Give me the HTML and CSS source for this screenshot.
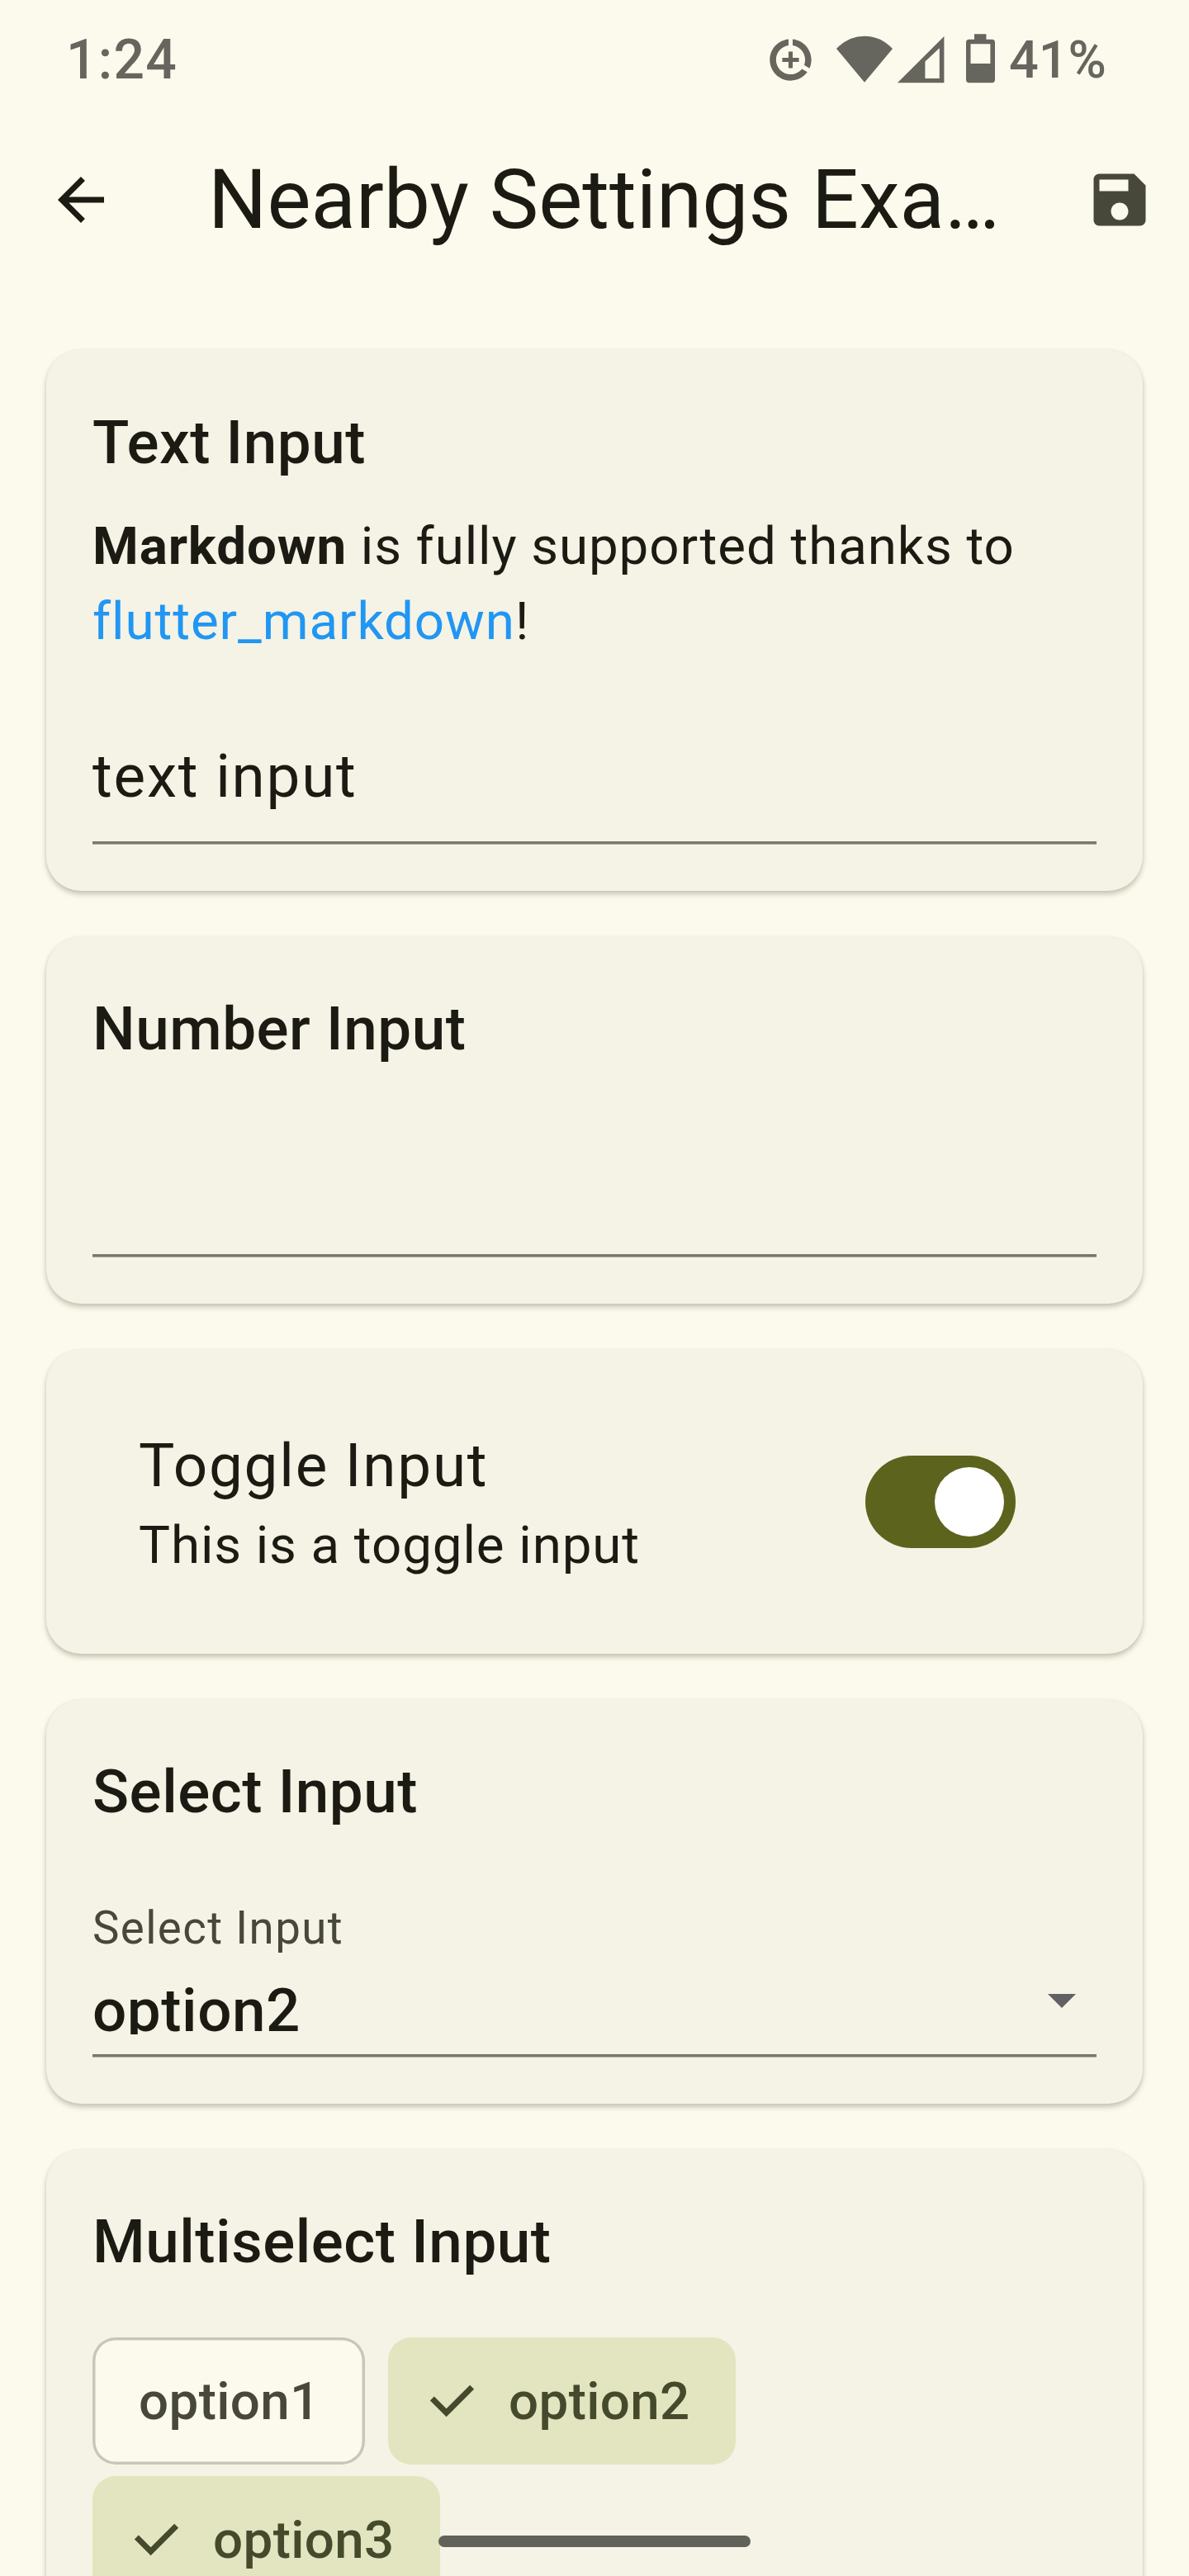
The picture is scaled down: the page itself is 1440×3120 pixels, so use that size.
FILE: index.html
```html
<!DOCTYPE html>
<html lang="en">
<head>
<meta charset="utf-8">
<title>Nearby Settings Example</title>
<link rel="stylesheet" href="styles.css">
</head>
<body>
<div class="screen">
  <header class="status">
    <span class="clock">1:24</span>
    <svg class="status-icons" width="282" height="70" viewBox="927 38 282 70">
      <path transform="translate(927.3 42.3) scale(2.515)" d="M11 8v3H8v2h3v3h2v-3h3v-2h-3V8h-2zm2-5.950v3.030c3.390.490 6 3.390 6 6.920 0 .900-.180 1.750-.480 2.540l2.600 1.530c.560-1.240.880-2.620.880-4.070 0-5.180-3.950-9.450-9-9.950zM12 19c-3.870 0-7-3.130-7-7 0-3.530 2.610-6.430 6-6.920V2.050c-5.060.500-9 4.760-9 9.950 0 5.520 4.470 10 9.990 10 3.310 0 6.240-1.610 8.060-4.090l-2.600-1.530C16.170 17.980 14.210 19 12 19z"/>
      <path d="M1047 99.700L1013 59Q1027.500 43.700 1047 43.700T1081 59Z"/>
      <path fill-rule="evenodd" d="M1087 100.200L1143.400 44V100.200ZM1120.400 95H1137.800V58.300L1120.400 74.500Z"/>
      <path fill-rule="evenodd" d="M1180 41.300H1194.400V47.700H1201.400Q1205 47.700 1205 51.300V96.500Q1205 100.200 1201.400 100.200H1173.600Q1170 100.200 1170 96.500V51.300Q1170 47.700 1173.600 47.700H1180ZM1175.500 53.300V77H1199.400V53.300Z"/>
    </svg>
    <span class="battery">41%</span>
  </header>

  <nav class="appbar">
    <svg class="icon back" viewBox="0 0 24 24"><path d="M20 11H7.830l5.590-5.590L12 4l-8 8 8 8 1.410-1.410L7.830 13H20v-2z"/></svg>
    <h1 class="title">Nearby Settings Exa…</h1>
    <svg class="icon save" viewBox="0 0 24 24"><path d="M17 3H5c-1.110 0-2 .9-2 2v14c0 1.100.890 2 2 2h14c1.100 0 2-.9 2-2V7l-4-4zm-5 16c-1.660 0-3-1.340-3-3s1.340-3 3-3 3 1.340 3 3-1.340 3-3 3zm3-10H5V5h10v4z"/></svg>
  </nav>

  <main class="cards">
    <section class="card card-text">
      <h2 class="heading">Text Input</h2>
      <p class="desc"><b>Markdown</b> is fully supported thanks to <a class="link">flutter_markdown</a>!</p>
      <div class="field"><span class="value">text input</span></div>
      <div class="rule"></div>
    </section>

    <section class="card">
      <h2 class="heading">Number Input</h2>
      <div class="field field-empty"></div>
      <div class="rule"></div>
    </section>

    <section class="card card-toggle">
      <div class="toggle-text">
        <div class="toggle-title">Toggle Input</div>
        <div class="toggle-sub">This is a toggle input</div>
      </div>
      <div class="switch"><div class="thumb"></div></div>
    </section>

    <section class="card">
      <h2 class="heading">Select Input</h2>
      <div class="label">Select Input</div>
      <div class="select">
        <span class="selected">option2</span>
        <svg class="caret" width="34" height="17" viewBox="0 0 34 17"><path d="M0 0H34L17 17Z"/></svg>
      </div>
      <div class="rule"></div>
    </section>

    <section class="card card-multi">
      <h2 class="heading">Multiselect Input</h2>
      <div class="chips">
        <div class="chip outline"><span>option1</span></div>
        <div class="chip filled">
          <svg class="check" viewBox="0 0 69 69"><path d="M10.350 31.050L27.600 48.300L58.650 17.250"/></svg>
          <span>option2</span>
        </div>
        <div class="chip filled">
          <svg class="check" viewBox="0 0 69 69"><path d="M10.350 31.050L27.600 48.300L58.650 17.250"/></svg>
          <span>option3</span>
        </div>
      </div>
    </section>
  </main>
  <div class="home-bar"></div>
</div>
</body>
</html>
```
FILE: styles.css
```css
* { box-sizing: border-box; }
body {
  margin: 0;
  background: #fcfaec;
  color: #1c1b13;
  font-family: Roboto, sans-serif;
}
.screen {
  position: relative;
  width: 1440px;
  height: 3120px;
  overflow: hidden;
  display: flex;
  flex-direction: column;
}
h1, h2, p { margin: 0; }

.status {
  height: 144px;
  flex: none;
  display: flex;
  align-items: center;
  padding: 1px 100px 0 80px;
  color: #66655e;
  font-weight: 500;
}
.clock { font-size: 66px; letter-spacing: 1.3px; }
.status-icons { margin-left: auto; fill: #66655e; }
.battery { font-size: 63px; margin-left: 13px; }

.appbar {
  height: 196px;
  flex: none;
  display: flex;
  align-items: center;
  padding: 0 42px 0 56px;
}
.icon { width: 84px; height: 84px; flex: none; }
.back { fill: #1c1b13; }
.save { fill: #47473a; margin-left: auto; }
.title {
  margin-left: 112px;
  font-size: 100.100px;
  font-weight: 400;
  line-height: 116px;
  white-space: nowrap;
}

.cards {
  display: flex;
  flex-direction: column;
  gap: 56px;
  padding: 84px 56px 0;
}
.card {
  flex: none;
  padding: 56px;
  border-radius: 42px;
  background: #f5f3e5;
  box-shadow: 0 4px 6px rgba(50, 48, 25, 0.26), 0 0 4px rgba(50, 48, 25, 0.06);
}
.card-text { padding-top: 57px; }
.heading {
  font-size: 72.8px;
  font-weight: 500;
  line-height: 110px;
  letter-spacing: 0.53px;
  white-space: nowrap;
}
.desc {
  margin-top: 25px;
  font-size: 63.7px;
  line-height: 91px;
  letter-spacing: 0.9px;
}
.desc b { font-weight: 700; }
.link { color: #2196f3; }
.field {
  height: 221px;
  display: flex;
  align-items: flex-end;
  padding-bottom: 29px;
}
.field-empty { height: 218px; }
.value { font-size: 72.8px; line-height: 100px; letter-spacing: 1.75px; }
.rule { height: 4px; background: linear-gradient(#7a7868 3px, #b0ae9f 3px); }

.card-toggle {
  height: 368px;
  display: flex;
  justify-content: space-between;
  align-items: center;
  padding: 0 154px 0 112px;
}
.toggle-text { padding-top: 9px; }
.toggle-title { font-size: 72.8px; line-height: 92px; letter-spacing: 1.75px; margin-bottom: 5px; }
.toggle-sub { font-size: 63.7px; line-height: 92px; letter-spacing: 0.9px; }
.switch {
  width: 182px;
  height: 112px;
  padding: 14px;
  display: flex;
  justify-content: flex-end;
  border-radius: 56px;
  background: #5c631d;
}
.thumb { width: 84px; height: 84px; border-radius: 50%; background: #fff; }

.label {
  margin-top: 77px;
  font-size: 54.6px;
  line-height: 66px;
  letter-spacing: 1.4px;
  color: #47473a;
}
.select {
  height: 84px;
  margin: 12px 0 24px;
  padding-right: 25px;
  display: flex;
  justify-content: space-between;
  overflow: hidden;
}
.selected { font-size: 72.8px; font-weight: 500; line-height: 110px; letter-spacing: 0.53px; }
.caret { margin-top: 35px; fill: #616161; }

.chips {
  margin-top: 61px;
  display: flex;
  flex-wrap: wrap;
  gap: 14px 28px;
  width: 900px;
}
.chip {
  height: 154px;
  display: flex;
  align-items: center;
  border-radius: 28px;
  font-size: 63.7px;
  font-weight: 500;
  letter-spacing: 0.35px;
}
.outline {
  width: 330px;
  padding-left: 56px;
  background: #fcfaec;
  color: #47473a;
  box-shadow: inset 0 0 0 3.500px #c8c7b7;
}
.filled {
  width: 421px;
  padding-left: 43px;
  background: #e2e5c0;
  color: #464a2c;
}
.check {
  width: 69px;
  height: 69px;
  margin-right: 34px;
  fill: none;
  stroke: #464a2c;
  stroke-width: 7;
}
.home-bar {
  position: absolute;
  left: 531px;
  top: 3071px;
  width: 378px;
  height: 14px;
  border-radius: 7px;
  background: #61625a;
}
```
